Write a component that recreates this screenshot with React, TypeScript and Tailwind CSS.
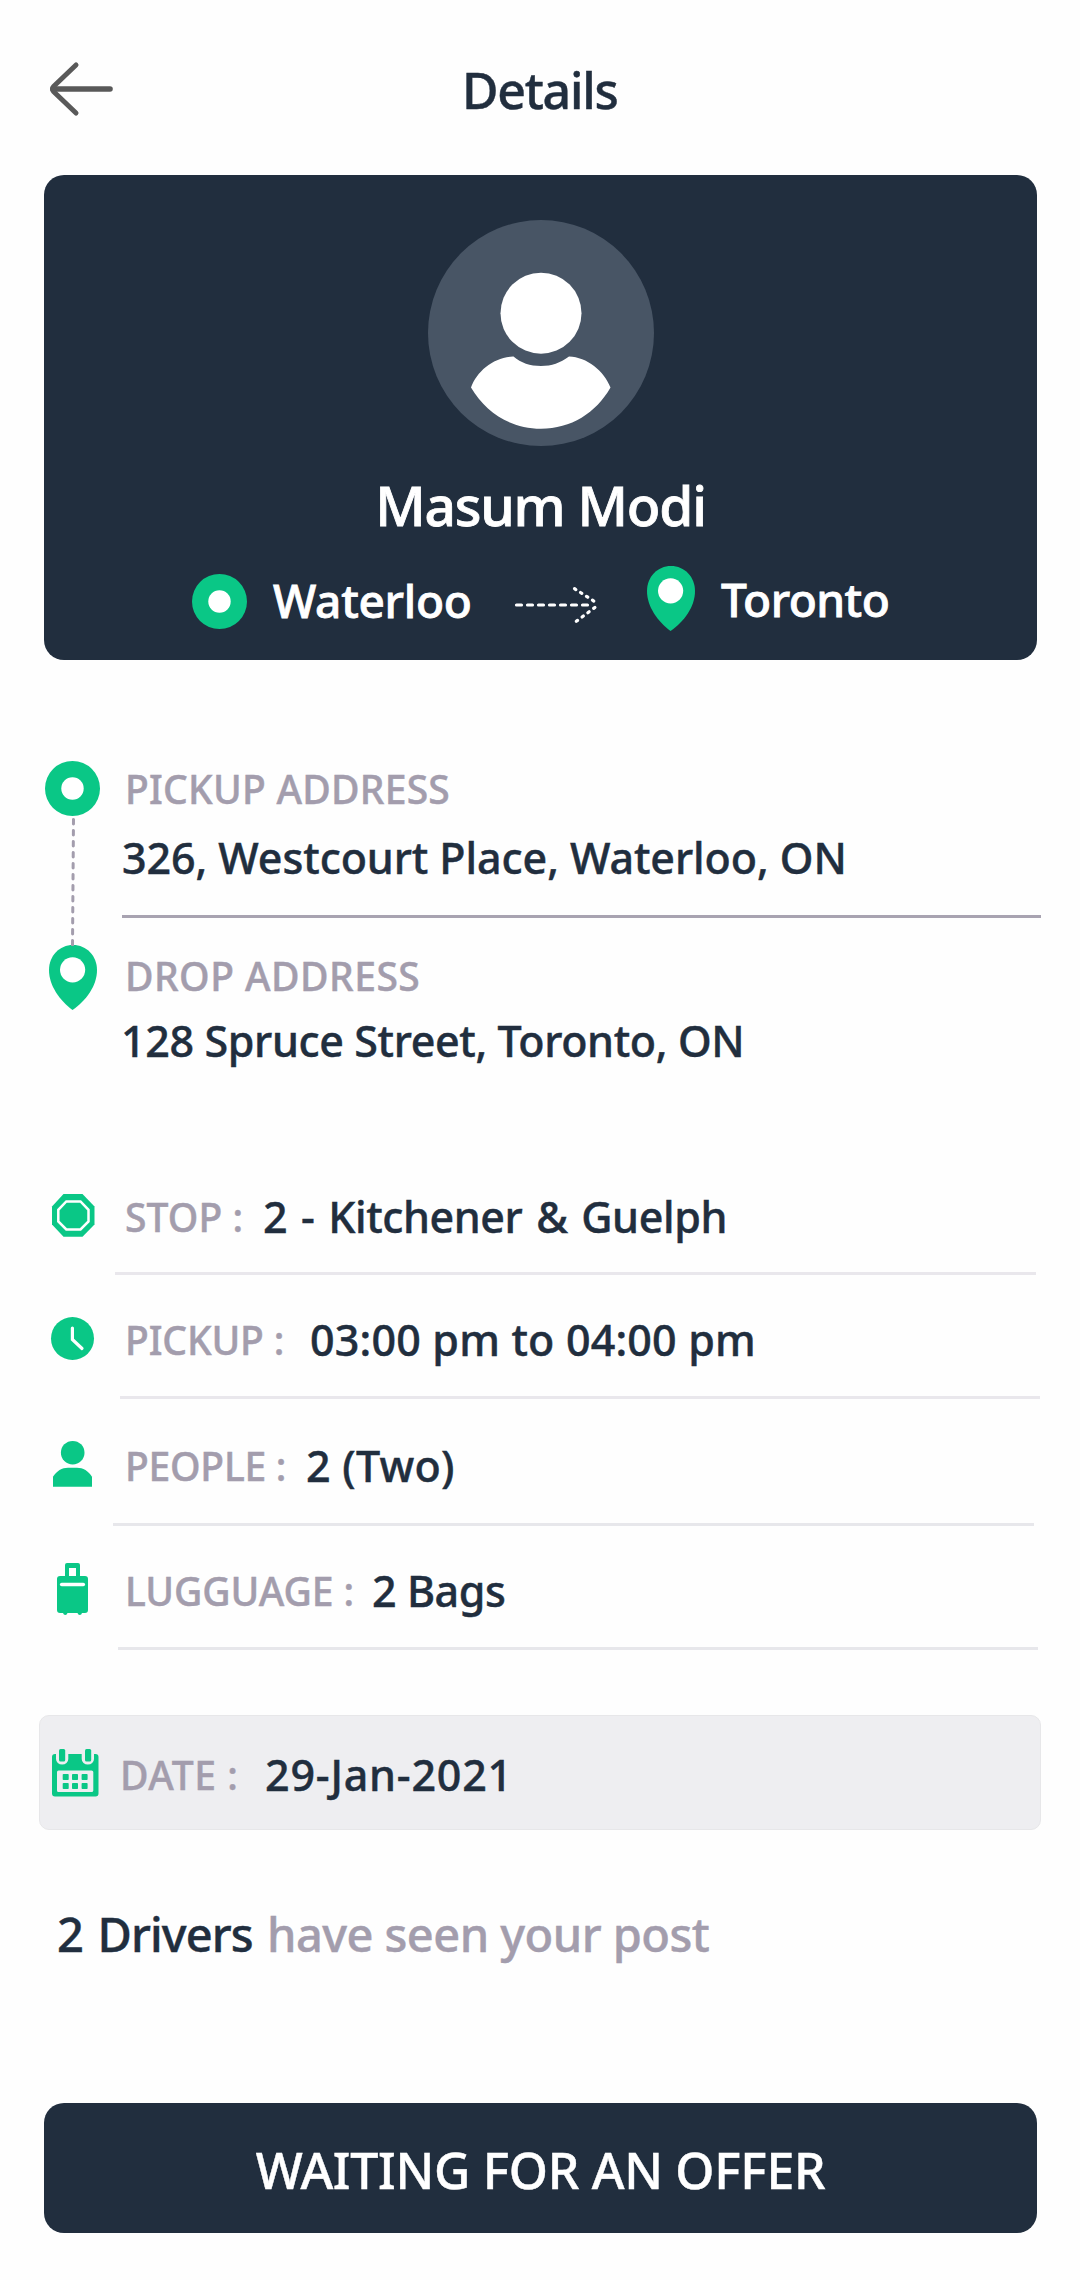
import type { ReactNode } from "react";

const GREEN = "#0ac786";

function BackArrow() {
  return (
    <svg className="h-[60px] w-[80px]" viewBox="0 0 80 60" fill="none" stroke="#595959" strokeLinecap="round" strokeLinejoin="round">
      <path d="M32 5 9.5 26.5a3.5 3.5 0 0 0 0 5L32 53" strokeWidth="5" />
      <path d="M9 29H66" strokeWidth="5.6" />
    </svg>
  );
}

function Avatar() {
  return (
    <svg className="h-[226px] w-[226px]" viewBox="0 0 226 226">
      <circle cx="113" cy="113" r="113" fill="#485565" />
      <circle cx="113" cy="93.200" r="40.500" fill="#fff" />
      <path d="M85 136.500C66 137 49 151 43 167.500C58 193 83 208.700 113 208.700C143 208.700 168 193 182.500 167.500C176 151 159 137 141 136.500C132 143 124 146 113 146C102 146 93 143 85.500 136.500Z" fill="#fff" />
    </svg>
  );
}

function OriginDot() {
  return (
    <svg className="h-[55px] w-[55px]" viewBox="0 0 55 55">
      <circle cx="27.500" cy="27.500" r="27.500" fill={GREEN} />
      <circle cx="27.500" cy="27.500" r="11.200" fill="#fff" />
    </svg>
  );
}

function Pin() {
  return (
    <svg className="h-[65px] w-[48px]" viewBox="0 0 48 65">
      <path d="M24 0C10.500 0 0 10.800 0 25C0 41 11 55.500 23.500 65C37 55.500 48 41 48 25C48 10.800 37.500 0 24 0Z" fill={GREEN} />
      <circle cx="23.600" cy="24.800" r="12.600" fill="#fff" />
    </svg>
  );
}

function DashedArrow() {
  return (
    <svg className="h-[50px] w-[90px]" viewBox="0 0 90 50" fill="none" stroke="#fff" strokeWidth="3.200" strokeLinecap="round">
      <path d="M6.500 25H80" strokeDasharray="5 6" />
      <path d="M64.500 8.700 84.500 21.500" strokeDasharray="1.600 5.500" />
      <path d="M66.300 41.300 85.500 27" strokeDasharray="1.600 5.600" />
    </svg>
  );
}

function StopIcon() {
  return (
    <>
      <path d="M20.500 8H39.500L51.500 20.500V38.500L39.500 50.700H20.500L9 38.500V20.500Z" fill={GREEN} />
      <path d="M23.300 15.500H37.500L45.500 23.800V35.400L37.500 43.500H23.300L15.300 35.400V23.800Z" fill="none" stroke="#fff" strokeWidth="2.500" />
    </>
  );
}

function ClockIcon() {
  return (
    <>
      <circle cx="29.500" cy="29.500" r="21.500" fill={GREEN} />
      <path d="M29.400 19V30.500L39 39.500" fill="none" stroke="#fff" strokeWidth="3.200" strokeLinecap="round" />
    </>
  );
}

function PersonIcon() {
  return (
    <g fill={GREEN}>
      <circle cx="29.700" cy="17.700" r="11.800" />
      <path d="M10 51.700V41.700C13.500 36 19 32.700 25 32.700H34C40 32.700 45.500 36 49 41.700V51.700Z" />
    </g>
  );
}

function LuggageIcon() {
  return (
    <>
      <path d="M24 3H35Q37 3 37 5V16H42Q45 16 45 19V50Q45 53 42 53H39Q38.500 55 36.800 55T34.500 53H24.500Q24 55 22.300 55T20 53H17Q14 53 14 50V19Q14 16 17 16H22V5Q22 3 24 3ZM26 8V16H33V8Z" fill={GREEN} fillRule="evenodd" />
      <path d="M18.700 24.500H40.300" stroke="#fff" strokeWidth="3.600" strokeLinecap="round" />
    </>
  );
}

function CalendarIcon() {
  return (
    <g fill={GREEN}>
      <path
        fillRule="evenodd"
        d="M12 10H13V15A6.100 5.500 0 0 0 25.300 15V10H38.700V15A6.100 5.500 0 0 0 51 15V10H52.500Q55.500 10 55.500 13V49.500Q55.500 52.500 52.500 52.500H12Q9 52.500 9 49.500V13Q9 10 12 10ZM15.500 26.500Q14 26.500 14 28V46.500Q14 48 15.500 48H48.500Q50.300 48 50.300 46.500V28Q50.300 26.500 48.500 26.500Z"
      />
      <rect x="16" y="5" width="6.200" height="12.500" rx="1.500" />
      <rect x="42" y="5" width="6.200" height="12.500" rx="1.500" />
      {[30, 39].map((y) => [19.7, 29, 38.6].map((x) => <rect key={`${x}-${y}`} x={x} y={y} width="6" height="6" rx="0.800" />))}
    </g>
  );
}

function RowIcon({ children }: { children: ReactNode }) {
  return (
    <svg className="h-[60px] w-[60px] shrink-0" viewBox="0 0 60 60">
      {children}
    </svg>
  );
}

type Detail = {
  icon: ReactNode;
  label: string;
  value: string;
  row: string;
  labelStyle: string;
  valueStyle: string;
  line: string;
};

const details: Detail[] = [
  {
    icon: <StopIcon />,
    label: "STOP :",
    value: "2 - Kitchener & Guelph",
    row: "mt-[115px]",
    labelStyle: "w-[138px] tracking-[0.1px]",
    valueStyle: "tracking-[-0.4px] [word-spacing:3px]",
    line: "mt-[26px] ml-[115px] w-[921px] bg-[#e9e7ec]",
  },
  {
    icon: <ClockIcon />,
    label: "PICKUP :",
    value: "03:00 pm to 04:00 pm",
    row: "mt-[34px]",
    labelStyle: "w-[185px] tracking-[-0.15px]",
    valueStyle: "tracking-[0.18px]",
    line: "mt-[27px] ml-[120px] w-[920px] bg-[#e9e7ec]",
  },
  {
    icon: <PersonIcon />,
    label: "PEOPLE :",
    value: "2 (Two)",
    row: "mt-[36px]",
    labelStyle: "w-[181px] tracking-[-0.25px]",
    valueStyle: "tracking-[0.25px]",
    line: "mt-[28px] ml-[113px] w-[921px] bg-[#e7e7eb]",
  },
  {
    icon: <LuggageIcon />,
    label: "LUGGUAGE :",
    value: "2 Bags",
    row: "mt-[34px]",
    labelStyle: "w-[247px] tracking-[-0.1px]",
    valueStyle: "tracking-[-0.43px]",
    line: "mt-[27px] ml-[118px] w-[920px] bg-[#e7e7eb]",
  },
];

export default function App() {
  return (
    <main className="h-[2280px] w-[1080px] overflow-hidden bg-[#fefefe] font-['Noto_Sans',sans-serif] leading-[60px] font-medium whitespace-pre text-[#212e3e] [-webkit-text-stroke:0.45px_currentColor]">
      <header className="flex h-[175px] pt-[60px] pl-[44px]">
        <BackArrow />
        <h1 className="ml-[338px] text-[50px] leading-[60px] tracking-[-1.27px]">Details</h1>
      </header>

      <section className="ml-[44px] flex h-[485px] w-[993px] flex-col items-center rounded-[20px] bg-[#212e3e] pt-[45px] text-white [-webkit-text-stroke:0.8px_currentColor]">
        <Avatar />
        <h2 className="mt-[29px] text-[55px] leading-[60px] tracking-[-1.19px]">Masum Modi</h2>
        <div className="mt-[25px] flex w-full items-start pl-[148px] text-[46px]">
          <div className="mt-[14px]"><OriginDot /></div>
          <span className="mt-[10px] ml-[26px] w-[200px] tracking-[-0.27px]">Waterloo</span>
          <div className="mt-[20px] ml-[37px]"><DashedArrow /></div>
          <div className="mt-[6px] ml-[47px]"><Pin /></div>
          <span className="mt-[9px] ml-[26px] tracking-[-0.52px]">Toronto</span>
        </div>
      </section>

      <section className="mt-[99px] flex pl-[45px]">
        <div className="mt-[2px] flex w-[55px] flex-col items-center">
          <OriginDot />
          <svg className="z-10 h-[130px] w-[10px]" viewBox="0 0 10 130" fill="none">
            <path d="M5.500 3.500 4.500 130" stroke="#a39dad" strokeWidth="3" strokeLinecap="round" strokeDasharray="4.500 6.500" />
          </svg>
          <div className="mt-[-1px]"><Pin /></div>
        </div>
        <div className="ml-[22px] flex w-[919px] flex-col text-[43px]">
          <span className="ml-[3px] text-[39px] tracking-[0.25px] text-[#a39dad]">PICKUP ADDRESS</span>
          <span className="mt-[9px] tracking-[-0.08px]">326, Westcourt Place, Waterloo, ON</span>
          <div className="mt-[27px] h-[3px] bg-[#a8a3b1]" />
          <span className="mt-[28px] ml-[3px] text-[39px] tracking-[0.48px] text-[#a39dad]">DROP ADDRESS</span>
          <span className="mt-[5px] ml-[-1px] tracking-[-0.37px]">128 Spruce Street, Toronto, ON</span>
        </div>
      </section>

      {details.map((d) => (
        <section key={d.label} className={d.row}>
          <div className="flex h-[60px] items-start pl-[43px] text-[43px]">
            <RowIcon>{d.icon}</RowIcon>
            <span className="w-[22px]" />
            <div className={d.labelStyle}>
              <span className="mt-px block text-[39px] text-[#a39dad]">{d.label}</span>
            </div>
            <div className="mt-px">
              <span className={d.valueStyle}>{d.value}</span>
            </div>
          </div>
          <div className={d.line}>
            <div className="h-[3px]" />
          </div>
        </section>
      ))}

      <section className="mt-[65px] ml-[39px] flex h-[115px] w-[1002px] items-start rounded-[10px] border border-[#e7e7e9] bg-[#eeeef1] pt-[28px] pl-[3px] text-[43px]">
        <RowIcon><CalendarIcon /></RowIcon>
        <span className="mt-px ml-[17px] w-[145px] text-[39px] tracking-[0.6px] text-[#a39dad]">DATE :</span>
        <span className="mt-px tracking-[0.8px]">29-Jan-2021</span>
      </section>

      <p className="mt-[74px] flex pl-[57px] text-[47px]">
        <span className="w-[210px] tracking-[-0.85px] [word-spacing:3px]">2 Drivers</span>
        <span className="tracking-[-0.55px] text-[#a39dad]">have seen your post</span>
      </p>

      <button className="mt-[139px] ml-[44px] flex h-[130px] w-[993px] items-start justify-center rounded-[20px] bg-[#212e3e] pt-[37px] text-[50px] tracking-[-0.3px] text-white">
        WAITING FOR AN OFFER
      </button>
    </main>
  );
}
